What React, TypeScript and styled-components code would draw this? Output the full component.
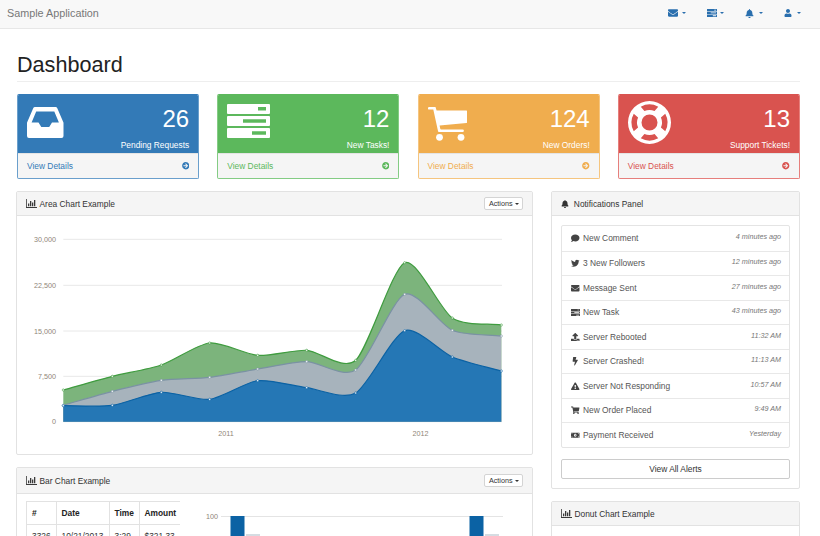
import React from "react";
import styled, { createGlobalStyle } from "styled-components";
import {
  FaBell, FaBolt, FaArrowCircleRight, FaComment, FaEnvelope, FaExclamationTriangle,
  FaMoneyBillAlt, FaShoppingCart, FaTwitter, FaUpload, FaUser,
} from "react-icons/fa";

const Global = createGlobalStyle`
  html, body { margin: 0; padding: 0; height: 536px; overflow: hidden; background: #fff; }
  body { font-family: "Liberation Sans", Arial, sans-serif; font-size: 8.4px; line-height: 12px; color: #333; }
  * { box-sizing: border-box; }
`;

const TopBar = styled.header`
  height: 29px; background: #f8f8f8; border-bottom: 1px solid #e7e7e7;
  display: flex; align-items: center; justify-content: space-between; padding: 0 19px 2px 7px;
`;
const Brand = styled.span`font-size: 10.8px; color: #777;`;
const NavIcons = styled.nav`display: flex; align-items: center; gap: 21px;`;
const NavItem = styled.span`display: flex; align-items: center; justify-content: space-between; width: 17.5px; color: #2a6fae;`;
const Caret = styled.i`
  display: block; width: 0; height: 0;
  border-left: 2.4px solid transparent; border-right: 2.4px solid transparent;
  border-top: 2.4px solid currentColor;
`;
const Page = styled.main`padding: 0 20px 0 17px;`;
const Title = styled.h1`
  margin: 0 0 12px; padding: 23px 0 3px; font-size: 21.6px; line-height: 26px; font-weight: 400;
  color: #222; border-bottom: 1px solid #eee; height: 53px;
`;
const Cards = styled.section`display: grid; grid-template-columns: repeat(4, 182.2px); justify-content: space-between; margin-bottom: 12px;`;
const Card = styled.article<{ $color: string; $soft: string }>`
  height: 85px; border: 1px solid ${p => p.$soft}; border-top-color: ${p => p.$color}; border-radius: 2px;
  overflow: hidden; color: ${p => p.$color}; display: flex; flex-direction: column; background: #f5f5f5;
`;
const CardTop = styled.div<{ $color: string }>`
  height: 58px; background: ${p => p.$color}; color: #fff; display: flex; justify-content: space-between;
  margin: 0 -1px; padding: 0 10px;
`;
const CardIcon = styled.div<{ $top: number }>`padding-top: ${p => p.$top}px; line-height: 0;`;
const CardText = styled.div`text-align: right; padding-top: 11px;`;
const BigNumber = styled.div`font-size: 24px; line-height: 26px;`;
const CardLabel = styled.div`font-size: 8.4px; line-height: 12px; margin-top: 7px;`;
const CardFoot = styled.footer`
  flex: 1; display: flex; align-items: center; justify-content: space-between;
  padding: 0 9px; border-top: 1px solid #e4e4e4; font-size: 8.4px;
`;
const Columns = styled.div`display: grid; grid-template-columns: 517px 249px; justify-content: space-between; margin-left: -1px;`;
const Column = styled.div`display: flex; flex-direction: column; gap: 12px;`;
const Panel = styled.section<{ $h?: number }>`
  border: 1px solid #e2e2e2; border-radius: 2px; background: #fff; ${p => (p.$h ? `height: ${p.$h}px;` : "")}
`;
const PanelHead = styled.div<{ $h?: number }>`
  height: ${p => p.$h ?? 24}px; background: #f5f5f5; border-bottom: 1px solid #e2e2e2; display: flex; align-items: center;
  justify-content: space-between; padding: 0 9px; color: #333;
`;
const HeadTitle = styled.span`display: flex; align-items: center; gap: 2.5px;`;
const ActionBtn = styled.span`
  display: flex; align-items: center; gap: 2px; height: 13.5px; padding: 0 3.5px; background: #fff;
  border: 1px solid #d4d4d4; border-radius: 2px; font-size: 7.2px; color: #333;
`;
const AreaSvg = styled.svg`display: block; width: 515px; height: 238px;`;
const BarBody = styled.div`display: flex; padding: 7px 0 0 9px; height: 60px; overflow: hidden;`;
const TableClip = styled.div`width: 154px; overflow: hidden; flex: none;`;
const Table = styled.table`
  table-layout: fixed; width: 160px; border-collapse: collapse; font-size: 8.4px;
  th, td { border: 1px solid #e2e2e2; padding: 5.5px 5px; text-align: left; line-height: 11px; vertical-align: top; }
  th { font-weight: 700; color: #222; height: 23px; white-space: nowrap; }
`;
const BarSvg = styled.svg`display: block; width: 340px; height: 60px; flex: none;`;
const NotifBody = styled.div`padding: 9px 9px 10px;`;
const List = styled.ul`margin: 0; padding: 0; list-style: none; border: 1px solid #e4e4e4; border-radius: 2px;`;
const Row = styled.li`
  height: 24.5px; display: flex; justify-content: space-between; padding: 0 8px 0 9px; color: #555;
  & + & { border-top: 1px solid #e8e8e8; }
`;
const RowLabel = styled.span`display: flex; align-items: center; gap: 3px; height: 100%;`;
const RowIcon = styled.span`display: flex; width: 9px; justify-content: center; color: #444; font-size: 8.5px;`;
const Time = styled.em`font-size: 7.2px; color: #777; padding-top: 4.5px;`;
const WideBtn = styled.div`
  margin-top: 11.5px; height: 19.5px; border: 1px solid #ccc; border-radius: 2px; display: flex; align-items: center;
  justify-content: center; color: #333;
`;

function TasksIcon({ size }: { size: number }) {
  return (
    <svg width={size} height={size * 34 / 43} viewBox="0 0 43 34" fill="currentColor" fillRule="evenodd" style={{ display: "block" }}>
      <path d="M1 0h41a1 1 0 0 1 1 1v8a1 1 0 0 1-1 1H1a1 1 0 0 1-1-1V1a1 1 0 0 1 1-1zM31 3v3.5h8V3z" />
      <path d="M1 12h41a1 1 0 0 1 1 1v8a1 1 0 0 1-1 1H1a1 1 0 0 1-1-1v-8a1 1 0 0 1 1-1zM16 15.3v3.4h23v-3.4z" />
      <path d="M1 24h41a1 1 0 0 1 1 1v8a1 1 0 0 1-1 1H1a1 1 0 0 1-1-1v-8a1 1 0 0 1 1-1zM25 27.3v3.4h14v-3.4z" />
    </svg>
  );
}
function InboxIcon() {
  return (
    <svg width="36.5" height="31" viewBox="0 0 36.5 31" fill="#fff" fillRule="evenodd" style={{ display: "block" }}>
      <path d="M8 0H28.5a2 2 0 0 1 1.8 1.2L36 14.5a3 3 0 0 1 .5 1.6V29a2 2 0 0 1-2 2H2a2 2 0 0 1-2-2V16.1a3 3 0 0 1 .5-1.6L6.2 1.2A2 2 0 0 1 8 0zM9.2 4.5L4.6 15.5H11.5L14.3 20H22.2L25 15.5H31.9L27.3 4.5z" />
    </svg>
  );
}
function CartIcon() {
  return (
    <svg width="39.5" height="34" viewBox="0 0 39.5 34" fill="#fff" style={{ display: "block" }}>
      <path d="M1.2 0H7.5L8.6 3.6H38.2a1.2 1.2 0 0 1 1.2 1.2V15a1 1 0 0 1-.9 1L11.6 18.6 12.2 21.6a1 1 0 0 0 1 .9H34.6a1.2 1.2 0 0 1 0 2.6H11.5a1.5 1.5 0 0 1-1.5-1.2L5.3 2.6H1.2a1.3 1.3 0 0 1 0-2.6z" />
      <circle cx="11.5" cy="30.3" r="3.4" />
      <circle cx="33" cy="30.3" r="3.4" />
    </svg>
  );
}
const polar = (r: number, deg: number) => {
  const a = (deg * Math.PI) / 180;
  return `${(21.5 + r * Math.cos(a)).toFixed(2)} ${(21.5 + r * Math.sin(a)).toFixed(2)}`;
};
const wedge = (mid: number) =>
  `M${polar(18, mid - 29)}A18 18 0 0 1 ${polar(18, mid + 29)}L${polar(12.5, mid + 24)}A12.5 12.5 0 0 0 ${polar(12.5, mid - 24)}Z`;
const ringPath =
  "M21.5 0a21.5 21.5 0 1 0 0 43a21.5 21.5 0 1 0 0-43zM21.5 13.5a8 8 0 1 1 0 16a8 8 0 1 1 0-16z" +
  [0, 90, 180, 270].map(wedge).join("");
function RingIcon() {
  return (
    <svg width="43" height="43" viewBox="0 0 43 43" fill="#fff" fillRule="evenodd" style={{ display: "block" }}>
      <path d={ringPath} />
    </svg>
  );
}
function BarIcon() {
  return (
    <svg width="11" height="9" viewBox="0 0 11 9" style={{ display: "block" }} fill="#3a3a3a">
      <path d="M0 0h.8v7.9H11V9H0z" />
      <path d="M2 4.5h1.3v2.7H2zM4 2h1.3v5.2H4zM6 3.5h1.3v3.7H6zM8 1h1.3v6.2H8z" />
    </svg>
  );
}

type P = [number, number];
const xs = [63.3, 112.3, 161.3, 209.7, 257.7, 306.7, 355.7, 404.7, 452.3, 501.3];
const green = [390, 376.3, 365, 343, 355.3, 350.3, 360.3, 262.7, 318, 325];
const grey = [405.3, 391.3, 380.3, 377.3, 369, 361.7, 370, 294.3, 330.3, 336];
const blue = [405.7, 405.3, 392.3, 399.3, 380.7, 387.7, 393, 330.7, 357, 371];
const BASE = 421.7;
const AXIS = "#8f8678";

function spline(ys: number[]) {
  const pts: P[] = ys.map((y, i) => [xs[i], y]);
  const g = pts.map((p, i) => {
    const a = pts[Math.max(i - 1, 0)], b = pts[Math.min(i + 1, pts.length - 1)];
    return (b[1] - a[1]) / (b[0] - a[0]);
  });
  let d = `M${pts[0][0]} ${pts[0][1]}`;
  for (let i = 1; i < pts.length; i++) {
    const ix = (pts[i][0] - pts[i - 1][0]) / 4;
    d += `C${pts[i - 1][0] + ix} ${pts[i - 1][1] + ix * g[i - 1]} ${pts[i][0] - ix} ${pts[i][1] - ix * g[i]} ${pts[i][0]} ${pts[i][1]}`;
  }
  return d;
}
function Series({ ys, fill }: { ys: number[]; fill: string }) {
  return <path d={`${spline(ys)}L${xs[xs.length - 1]} ${BASE}L${xs[0]} ${BASE}Z`} fill={fill} />;
}
function SeriesLine({ ys, line }: { ys: number[]; line: string }) {
  return (
    <g>
      <path d={spline(ys)} fill="none" stroke={line} strokeWidth="1.2" />
      {ys.map((y, i) => <circle key={i} cx={xs[i]} cy={y} r="1.1" fill="#fff" stroke={line} strokeWidth=".6" />)}
    </g>
  );
}

const cards = [
  { c: "#337ab7", s: "#6a9fcc", n: "26", l: "Pending Requests", top: 11.5, icon: <InboxIcon /> },
  { c: "#5cb85c", s: "#84cc84", n: "12", l: "New Tasks!", top: 9, icon: <TasksIcon size={43} /> },
  { c: "#f0ad4e", s: "#f5c57f", n: "124", l: "New Orders!", top: 12, icon: <CartIcon /> },
  { c: "#d9534f", s: "#e67f7c", n: "13", l: "Support Tickets!", top: 6, icon: <RingIcon /> },
];
const rows = [
  { i: <FaComment />, t: "New Comment", w: "4 minutes ago" },
  { i: <FaTwitter />, t: "3 New Followers", w: "12 minutes ago" },
  { i: <FaEnvelope />, t: "Message Sent", w: "27 minutes ago" },
  { i: <TasksIcon size={9} />, t: "New Task", w: "43 minutes ago" },
  { i: <FaUpload />, t: "Server Rebooted", w: "11:32 AM" },
  { i: <FaBolt />, t: "Server Crashed!", w: "11:13 AM" },
  { i: <FaExclamationTriangle />, t: "Server Not Responding", w: "10:57 AM" },
  { i: <FaShoppingCart />, t: "New Order Placed", w: "9:49 AM" },
  { i: <FaMoneyBillAlt />, t: "Payment Received", w: "Yesterday" },
];
const ticks: [string, number][] = [["30,000", 239.3], ["22,500", 285.3], ["15,000", 331], ["7,500", 376.3], ["0", 421.7]];

export default function App() {
  return (
    <>
      <Global />
      <TopBar>
        <Brand>Sample Application</Brand>
        <NavIcons>
          <NavItem><FaEnvelope size={10} /><Caret /></NavItem>
          <NavItem><TasksIcon size={10} /><Caret /></NavItem>
          <NavItem><FaBell size={9} /><Caret /></NavItem>
          <NavItem><FaUser size={8} /><Caret /></NavItem>
        </NavIcons>
      </TopBar>
      <Page>
        <Title>Dashboard</Title>
        <Cards>
          {cards.map(k => (
            <Card key={k.l} $color={k.c} $soft={k.s}>
              <CardTop $color={k.c}>
                <CardIcon $top={k.top}>{k.icon}</CardIcon>
                <CardText><BigNumber>{k.n}</BigNumber><CardLabel>{k.l}</CardLabel></CardText>
              </CardTop>
              <CardFoot><span>View Details</span><FaArrowCircleRight size={7.5} /></CardFoot>
            </Card>
          ))}
        </Cards>
        <Columns>
          <Column>
            <Panel $h={264}>
              <PanelHead>
                <HeadTitle><BarIcon />Area Chart Example</HeadTitle>
                <ActionBtn>Actions<Caret /></ActionBtn>
              </PanelHead>
              <AreaSvg viewBox="17 216 515 238">
                {ticks.map(([l, y]) => (
                  <g key={l}>
                    <line x1="63.3" x2="502" y1={y} y2={y} stroke="#e8e8e8" strokeWidth="1" />
                    <text x="56" y={y + 2.5} textAnchor="end" fontSize="7.2" fill={AXIS}>{l}</text>
                  </g>
                ))}
                <Series ys={green} fill="#7cb47c" />
                <Series ys={grey} fill="#a7b3bc" />
                <Series ys={blue} fill="#2577b5" />
                <SeriesLine ys={green} line="#3f9c3f" />
                <SeriesLine ys={grey} line="#7a92a3" />
                <SeriesLine ys={blue} line="#0b62a4" />
                <text x="226" y="435.5" textAnchor="middle" fontSize="7.2" fill={AXIS}>2011</text>
                <text x="420.5" y="435.5" textAnchor="middle" fontSize="7.2" fill={AXIS}>2012</text>
              </AreaSvg>
            </Panel>
            <Panel>
              <PanelHead $h={26}>
                <HeadTitle><BarIcon />Bar Chart Example</HeadTitle>
                <ActionBtn>Actions<Caret /></ActionBtn>
              </PanelHead>
              <BarBody>
                <TableClip>
                  <Table>
                    <colgroup><col width="29.5" /><col width="53" /><col width="30" /><col width="47" /></colgroup>
                    <thead><tr><th>#</th><th>Date</th><th>Time</th><th>Amount</th></tr></thead>
                    <tbody><tr><td>3326</td><td>10/21/2013</td><td>3:29 PM</td><td>$321.33</td></tr></tbody>
                  </Table>
                </TableClip>
                <BarSvg viewBox="180 501 340 60">
                  <text x="218" y="518.5" textAnchor="end" fontSize="7.2" fill={AXIS}>100</text>
                  <line x1="221" x2="503" y1="516.5" y2="516.5" stroke="#e4e4e4" />
                  <rect x="230.5" y="516" width="14" height="30" fill="#0b62a4" />
                  <rect x="246" y="534" width="14" height="12" fill="#d5dce2" />
                  <rect x="469.5" y="516" width="14" height="30" fill="#0b62a4" />
                  <rect x="485" y="534" width="14" height="12" fill="#d5dce2" />
                </BarSvg>
              </BarBody>
            </Panel>
          </Column>
          <Column>
            <Panel $h={298}>
              <PanelHead>
                <HeadTitle><FaBell size={8} />&nbsp;Notifications Panel</HeadTitle>
              </PanelHead>
              <NotifBody>
                <List>
                  {rows.map(r => (
                    <Row key={r.t}>
                      <RowLabel><RowIcon>{r.i}</RowIcon>{r.t}</RowLabel>
                      <Time>{r.w}</Time>
                    </Row>
                  ))}
                </List>
                <WideBtn>View All Alerts</WideBtn>
              </NotifBody>
            </Panel>
            <Panel $h={200}>
              <PanelHead><HeadTitle><BarIcon />Donut Chart Example</HeadTitle></PanelHead>
            </Panel>
          </Column>
        </Columns>
      </Page>
    </>
  );
}
